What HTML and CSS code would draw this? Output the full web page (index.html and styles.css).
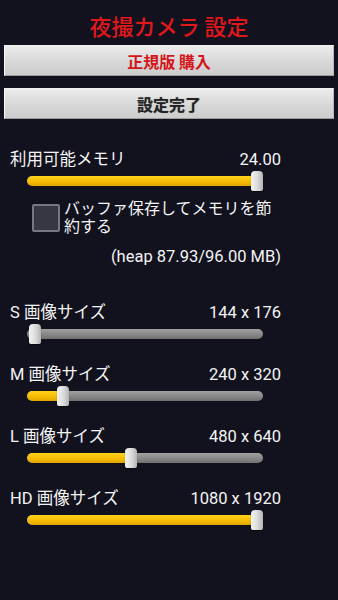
FILE: index.html
```html
<!DOCTYPE html>
<html lang="ja">
<head>
<meta charset="utf-8">
<link rel="stylesheet" href="styles.css">
</head>
<body>
<div class="screen">
  <h1 class="title">夜撮カメラ 設定</h1>
  <div class="buttons">
    <div class="btn btn-buy">正規版 購入</div>
    <div class="btn btn-done">設定完了</div>
  </div>
  <div class="settings">
    <div class="row"><span>利用可能メモリ</span><span>24.00</span></div>
    <div class="slider"><div class="track"><div class="fill" style="width:230px"></div></div><div class="thumb" style="left:224px"></div></div>
    <div class="check-row">
      <div class="checkbox"></div>
      <div class="check-text">バッファ保存してメモリを節<br>約する</div>
    </div>
    <div class="heap">(heap 87.93/96.00 MB)</div>

    <div class="section">
      <div class="row"><span>S 画像サイズ</span><span>144 x 176</span></div>
      <div class="slider"><div class="track"><div class="fill" style="width:0px"></div></div><div class="thumb" style="left:2px"></div></div>
    </div>
    <div class="section">
      <div class="row"><span>M 画像サイズ</span><span>240 x 320</span></div>
      <div class="slider"><div class="track"><div class="fill" style="width:34px"></div></div><div class="thumb" style="left:30px"></div></div>
    </div>
    <div class="section">
      <div class="row"><span>L 画像サイズ</span><span>480 x 640</span></div>
      <div class="slider"><div class="track"><div class="fill" style="width:102px"></div></div><div class="thumb" style="left:98px"></div></div>
    </div>
    <div class="section">
      <div class="row"><span>HD 画像サイズ</span><span>1080 x 1920</span></div>
      <div class="slider"><div class="track"><div class="fill" style="width:230px"></div></div><div class="thumb" style="left:224px"></div></div>
    </div>
  </div>
</div>
</body>
</html>
```
FILE: styles.css
```css
* { box-sizing: border-box; }
html, body { margin: 0; padding: 0; }
body {
  background: #12121e;
  font-family: Roboto, "Noto Sans CJK JP", sans-serif;
  color: #f4f4f4;
}
.screen {
  width: 338px;
  height: 600px;
  padding-top: 10px;
}
.title {
  margin: 0;
  font-size: 22px;
  line-height: 30px;
  font-weight: 500;
  color: #e0181c;
  text-align: center;
  font-family: "Noto Sans CJK JP", sans-serif;
}
.buttons {
  padding: 5px 4px 0 4px;
  display: flex;
  flex-direction: column;
  gap: 12px;
}
.btn {
  height: 31px;
  background: linear-gradient(#ececec, #d6d6d6 60%, #cdcdcd);
  border-left: 1px solid #f8f8f8;
  border-top: 1px solid #f0f0f0;
  border-bottom: 1px solid #9a9a9a;
  border-right: 1px solid #b8b8b8;
  display: flex;
  align-items: center;
  justify-content: center;
  font-family: "Noto Sans CJK JP", sans-serif;
  font-weight: bold;
  font-size: 16px;
}
.btn-buy { color: #d4161a; }
.btn-done { color: #222; text-shadow: 0 0 1px #888; }
.settings {
  padding: 30px 57px 0 10px;
}
.row {
  display: flex;
  justify-content: space-between;
  font-size: 16.5px;
  line-height: 22px;
  height: 22px;
}
.slider {
  position: relative;
  height: 20px;
  margin: 0 18px 0 17px;
  display: flex;
  align-items: center;
}
.track {
  width: 100%;
  height: 10px;
  border-radius: 5px;
  background: linear-gradient(#a0a0a0, #858585 60%, #707070);
  overflow: hidden;
}
.fill {
  height: 100%;
  background: linear-gradient(#ffd21a, #f5bb00 60%, #e0a400);
  border-radius: 5px 0 0 5px;
}
.thumb {
  position: absolute;
  top: 0;
  width: 12px;
  height: 20px;
  border-radius: 4px 4px 2px 2px;
  background: linear-gradient(90deg, #f2f2f2, #dedede 50%, #b4b4b4);
  box-shadow: 0 1px 1px rgba(0,0,0,0.5);
}
.check-row {
  display: flex;
  align-items: center;
  margin: 9px 0 0 22px;
  gap: 4px;
}
.checkbox {
  width: 28px;
  height: 28px;
  background: #373743;
  border: 2px solid #77777f;
  border-radius: 2px;
  flex: none;
}
.check-text {
  font-size: 16px;
  line-height: 18px;
}
.heap {
  text-align: right;
  font-size: 16.5px;
  line-height: 22px;
  margin-top: 10px;
}
.heap + .section { margin-top: 34px; }
.section { margin-bottom: 20px; }
```
